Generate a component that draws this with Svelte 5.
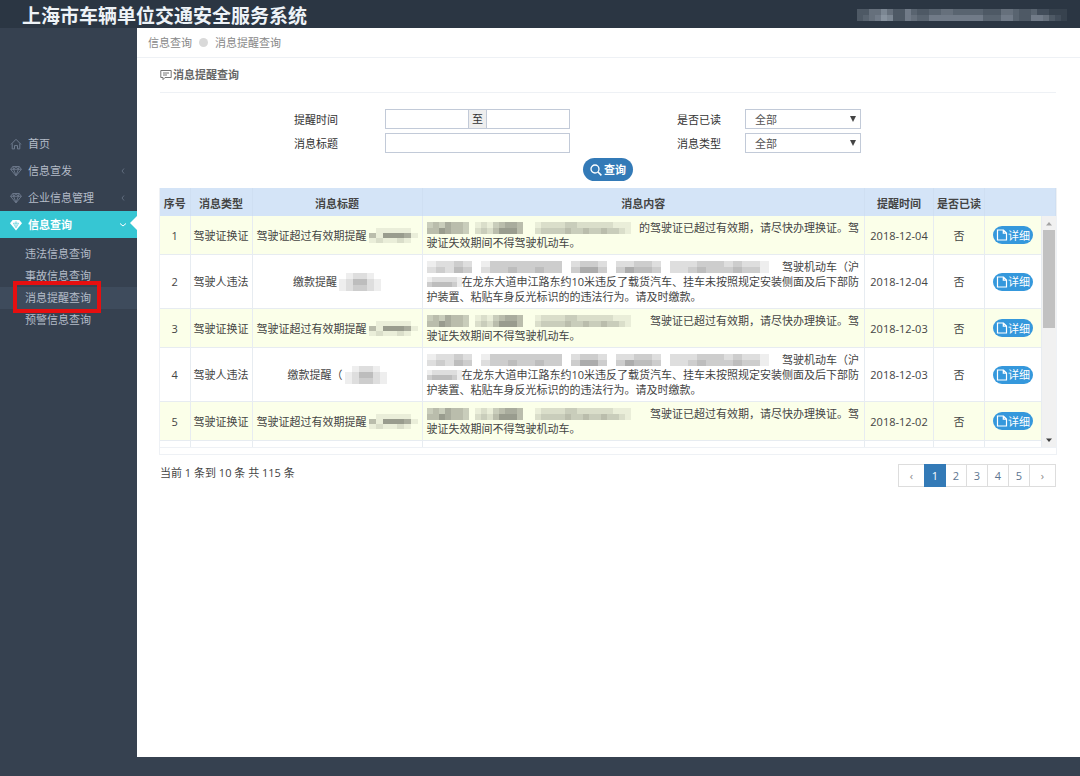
<script>
  const menu = [
    { label: '首页', icon: 'home' },
    { label: '信息宣发', icon: 'diamond', arrow: true },
    { label: '企业信息管理', icon: 'diamond', arrow: true },
    {
      label: '信息查询',
      icon: 'diamond',
      open: true,
      children: ['违法信息查询', '事故信息查询', '消息提醒查询', '预警信息查询']
    }
  ]

  let current = $state('消息提醒查询')
  let page = $state(1)
  const pages = [1, 2, 3, 4, 5]

  let form = $state({ from: '', to: '', title: '', read: 'all', type: 'all' })

  // masks: one digit per cell, 0 = clear, 9 = darkest
  const user = ['33557533643344554444433355433422111', '34568733654466666666644466433665321']
  const maskName = ['3435443012134554001222233222222111', '4465443023246664002333343343343321']
  const maskLong = ['12232013333333302332022332022233323221', '23243023343343303553035443022343334331']
  const maskShort = ['1222221', '3444431']
  const maskHead = ['0111110', '4166651', '1211210']
  const maskPlate = ['012210', '124421', '123321']

  const renewText = '驾驶证已超过有效期，请尽快办理换证。驾'
  const renewTail = '驶证失效期间不得驾驶机动车。'
  const placeText = '在龙东大道申江路东约10米违反了载货汽车、挂车未按照规定安装侧面及后下部防'
  const placeTail = '护装置、粘贴车身反光标识的的违法行为。请及时缴款。'

  const rows = [
    { id: 1, kind: 'renew', title: '驾驶证超过有效期提醒', lead: '的', date: '2018-12-04' },
    { id: 2, kind: 'fine', title: '缴款提醒', date: '2018-12-04' },
    { id: 3, kind: 'renew', title: '驾驶证超过有效期提醒', lead: '', date: '2018-12-03' },
    { id: 4, kind: 'fine', title: '缴款提醒（', date: '2018-12-03' },
    { id: 5, kind: 'renew', title: '驾驶证超过有效期提醒', lead: '', date: '2018-12-02' }
  ]
</script>

{#snippet mask(lines, cell, h, light = false)}
  <svg
    class="mask"
    class:light
    width={lines[0].length * cell}
    height={lines.length * h}
    shape-rendering="crispEdges"
    aria-hidden="true"
  >
    {#each lines as line, y}
      {#each line.split('') as v, x}
        <rect x={x * cell} y={y * h} width={cell} height={h} opacity={v * 0.065} />
      {/each}
    {/each}
  </svg>
{/snippet}

{#snippet cols()}
  <colgroup>
    <col class="c-no" />
    <col class="c-type" />
    <col class="c-title" />
    <col />
    <col class="c-date" />
    <col class="c-read" />
    <col class="c-act" />
  </colgroup>
{/snippet}

<div class="page">
  <header>
    <h1>上海市车辆单位交通安全服务系统</h1>
    <div class="user">{@render mask(user, 6, 6, true)}</div>
  </header>

  <div class="body">
    <nav>
      <ul>
        {#each menu as item}
          <li>
            <a href="#menu" class="item" class:active={item.open}>
              {#if item.icon === 'home'}
                <svg class="icon" viewBox="0 0 12 12">
                  <path d="M1 6.4 6 1.3l5 5.1M2.2 5.6v5.3h2.3V7.6h3v3.3h2.3V5.6" fill="none" stroke="currentColor" />
                </svg>
              {:else if item.open}
                <svg class="icon" viewBox="0 0 12 12">
                  <path d="M2.6 1h6.8L12 4.2 6 11.4 0 4.2z" fill="currentColor" />
                  <path d="M3.4 4.2h5.2L6 8.8zM6 2.2v5" fill="none" stroke="#36c6d3" stroke-width=".6" />
                </svg>
              {:else}
                <svg class="icon" viewBox="0 0 12 12">
                  <path d="M2.8 1.5h6.4l2.2 2.8L6 10.9.6 4.3zM.6 4.3h10.8M3.6 4.3 6 10.5l2.4-6.2L6 1.7zM2.8 1.5l.8 2.8M9.2 1.5l-.8 2.8" fill="none" stroke="currentColor" stroke-width=".9" />
                </svg>
              {/if}
              <span>{item.label}</span>
              {#if item.arrow}
                <svg class="arrow" viewBox="0 0 8 8"><path d="M5 1.5 3 4l2 2.5" /></svg>
              {:else if item.open}
                <svg class="arrow" viewBox="0 0 8 8"><path d="M1 2.5 4 5l3-2.5" /></svg>
              {/if}
            </a>
            {#if item.children}
              <ul class="sub">
                {#each item.children as child}
                  <li>
                    <a href="#sub" class:current={child === current} onclick={() => (current = child)}>{child}</a>
                  </li>
                {/each}
              </ul>
            {/if}
          </li>
        {/each}
      </ul>
    </nav>

    <main>
      <div class="crumbs">
        <a href="#query">信息查询</a>
        <i></i>
        <span>消息提醒查询</span>
      </div>

      <div class="content">
        <h2>
          <svg viewBox="0 0 12 12" width="12" height="12">
            <path d="M.8 1.5h10.4v7H5L3 10.6V8.5H.8zM3 4h6M3 6h4" fill="none" stroke="currentColor" stroke-width=".9" />
          </svg>
          消息提醒查询
        </h2>

        <form onsubmit={(e) => e.preventDefault()}>
          <div class="fields">
            <label for="from">提醒时间</label>
            <div class="range">
              <input id="from" type="text" bind:value={form.from} />
              <span>至</span>
              <input type="text" aria-label="结束时间" bind:value={form.to} />
            </div>
            <label class="second" for="read">是否已读</label>
            <div class="pick">
              <select id="read" bind:value={form.read}><option value="all">全部</option></select>
            </div>
            <label for="title">消息标题</label>
            <input id="title" type="text" bind:value={form.title} />
            <label class="second" for="type">消息类型</label>
            <div class="pick">
              <select id="type" bind:value={form.type}><option value="all">全部</option></select>
            </div>
          </div>
          <button class="search">
            <svg viewBox="0 0 12 12" width="12" height="12">
              <path d="M8 8l3.4 3.4" stroke="currentColor" stroke-width="1.6" />
              <circle cx="5" cy="5" r="4" fill="none" stroke="currentColor" stroke-width="1.3" />
            </svg>
            查询
          </button>
        </form>

        <div class="grid">
          <table class="head">
            {@render cols()}
            <thead>
              <tr>
                <th>序号</th>
                <th>消息类型</th>
                <th>消息标题</th>
                <th>消息内容</th>
                <th>提醒时间</th>
                <th>是否已读</th>
                <th></th>
              </tr>
            </thead>
          </table>
          <div class="scroller">
            <div class="view">
              <table>
                {@render cols()}
                <tbody>
                  {#each rows as row}
                    <tr>
                      <td>{row.id}</td>
                      <td>{row.kind === 'renew' ? '驾驶证换证' : '驾驶人违法'}</td>
                      <td>
                        <div class="line mid">
                          {row.title}
                          {#if row.kind === 'renew'}
                            {@render mask(maskHead, 7, 5)}
                          {:else}
                            {@render mask(maskPlate, 7, 6)}
                          {/if}
                        </div>
                      </td>
                      <td class="text">
                        {#if row.kind === 'renew'}
                          <div class="line fill">{@render mask(maskName, 6, 6)}<span>{row.lead}{renewText}</span></div>
                          <div class="line">{renewTail}</div>
                        {:else}
                          <div class="line fill">{@render mask(maskLong, 9, 6)}<span>驾驶机动车（沪</span></div>
                          <div class="line fill">{@render mask(maskShort, 5, 5)}<span>{placeText}</span></div>
                          <div class="line">{placeTail}</div>
                        {/if}
                      </td>
                      <td>{row.date}</td>
                      <td>否</td>
                      <td>
                        <button class="detail">
                          <svg viewBox="0 0 12 12" width="12" height="12">
                            <path d="M1.5 1h6l3 3v7h-9zM7.3 1v3.2h3.2" fill="none" stroke="currentColor" stroke-width="1.2" />
                          </svg>详细
                        </button>
                      </td>
                    </tr>
                  {/each}
                  <tr class="rest">
                    <td></td><td></td><td></td><td></td><td></td><td></td><td></td>
                  </tr>
                </tbody>
              </table>
            </div>
            <div class="bar">
              <svg viewBox="0 0 8 5"><path d="M1 4.5 4 1l3 3.5z" fill="#a3a3a3" /></svg>
              <div class="track"><div class="thumb"></div></div>
              <svg viewBox="0 0 8 5"><path d="M1 .5 4 4 7 .5z" fill="#404040" /></svg>
            </div>
          </div>
        </div>

        <div class="foot">
          <span>当前 1 条到 10 条 共 115 条</span>
          <div class="pager">
            <button class="step" aria-label="上一页" onclick={() => (page = Math.max(1, page - 1))}>‹</button>
            {#each pages as n}
              <button class:on={n === page} onclick={() => (page = n)}>{n}</button>
            {/each}
            <button class="step" aria-label="下一页" onclick={() => (page = Math.min(5, page + 1))}>›</button>
          </div>
        </div>
      </div>
    </main>
  </div>
</div>

<style>
  :global(body) {
    background: #364150;
  }

  .page {
    min-height: 100vh;
    box-sizing: border-box;
    padding-bottom: 19px;
    display: flex;
    flex-direction: column;
    font-family: 'Open Sans', 'Noto Sans CJK SC', sans-serif;
    font-size: 11px;
    line-height: 16px;
    color: #444;
  }

  header {
    height: 28px;
    display: flex;
    align-items: center;
    justify-content: space-between;
    padding: 0 13px 0 22px;
    background: #2b3643;
  }

  h1 {
    margin: 4px 0 0;
    font-size: 19px;
    line-height: 24px;
    font-weight: 700;
    color: #eef3f8;
  }

  .user {
    display: flex;
    margin-top: 2px;
  }

  .mask {
    flex: none;
    fill: #000;
  }

  .mask.light {
    fill: #dfe9f4;
  }

  .body {
    flex: 1;
    display: flex;
  }

  nav {
    width: 137px;
    flex: none;
    padding-top: 102px;
    box-sizing: border-box;
  }

  ul {
    list-style: none;
    margin: 0;
    padding: 0;
  }

  a {
    color: inherit;
    text-decoration: none;
  }

  .item {
    position: relative;
    display: flex;
    align-items: center;
    gap: 6px;
    height: 27px;
    padding: 0 10px;
    color: #b4bcc8;
  }

  .icon {
    width: 12px;
    height: 12px;
    color: #6f7c8f;
  }

  .arrow {
    width: 8px;
    height: 8px;
    margin-left: auto;
    fill: none;
    stroke: #606c7d;
  }

  .active {
    background: #36c6d3;
    color: #fff;
    font-weight: 700;
  }

  .active .icon {
    color: #fff;
  }

  .active .arrow {
    stroke: #fff;
  }

  .active::after {
    content: '';
    position: absolute;
    right: 0;
    top: 5px;
    border: 7px solid transparent;
    border-left: 0;
    border-right-color: #fff;
  }

  .sub {
    padding: 5px 0;
  }

  .sub a {
    position: relative;
    display: block;
    padding-left: 25px;
    line-height: 22px;
    color: #b4bcc8;
  }

  .sub .current {
    background: #3e4b5c;
  }

  .sub .current::after {
    content: '';
    position: absolute;
    left: 13px;
    top: -6px;
    width: 80px;
    height: 24px;
    border: 4px solid #e60f10;
  }

  main {
    flex: 1;
    min-width: 0;
    background: #fff;
  }

  .crumbs {
    display: flex;
    align-items: center;
    gap: 7px;
    height: 29px;
    padding-left: 11px;
    border-bottom: 1px solid #eef1f5;
    color: #888;
  }

  .crumbs i {
    width: 9px;
    height: 9px;
    border-radius: 50%;
    background: #d9d9d9;
  }

  .content {
    padding: 0 24px 0 23px;
  }

  h2 {
    display: flex;
    align-items: center;
    gap: 1px;
    height: 34px;
    margin: 0;
    border-bottom: 1px solid #eef1f5;
    font-size: 11px;
    font-weight: 700;
    color: #666;
  }

  form {
    padding: 16px 0 7px;
    display: flex;
    flex-direction: column;
    align-items: center;
  }

  .fields {
    width: 100%;
    box-sizing: border-box;
    padding: 0 195px 0 134px;
    display: grid;
    grid-template-columns: 91px 1fr 175px 116px;
    row-gap: 4px;
    align-items: center;
    color: #333;
  }

  .fields label {
    padding-top: 2px;
  }

  .fields .second {
    padding-left: 107px;
  }

  input,
  select {
    width: 100%;
    min-width: 0;
    height: 20px;
    box-sizing: border-box;
    border: 1px solid #c2cad8;
    border-radius: 0;
    background: #fff;
    font: inherit;
    color: #555;
  }

  .range {
    display: flex;
  }

  .range input {
    flex: 1;
  }

  .range span {
    padding: 0 3px;
    border: 1px solid #c2cad8;
    border-width: 1px 0;
    background: #eee;
    line-height: 18px;
    flex: none;
  }

  .pick {
    position: relative;
  }

  .pick select {
    appearance: none;
    padding: 2px 16px 0 9px;
  }

  .pick::after {
    content: '';
    position: absolute;
    right: 5px;
    top: 7px;
    border: 3px solid transparent;
    border-top: 6px solid #444;
    border-bottom: 0;
    pointer-events: none;
  }

  button {
    font: inherit;
    cursor: pointer;
  }

  .search {
    display: flex;
    align-items: center;
    gap: 2px;
    height: 23px;
    margin-top: 5px;
    padding: 0 7px;
    border: 0;
    border-radius: 12px;
    background: #337ab7;
    color: #fff;
    font-weight: 700;
  }

  .grid {
    border: 1px solid #eef1f5;
    border-top: 0;
    padding-bottom: 6px;
    margin: 0 -1px;
  }

  table {
    width: 100%;
    table-layout: fixed;
    border-collapse: collapse;
  }

  .c-no {
    width: 30px;
  }

  .c-type {
    width: 62px;
  }

  .c-title {
    width: 170px;
  }

  .c-date {
    width: 69px;
  }

  .c-read {
    width: 51px;
  }

  .c-act {
    width: 57px;
  }

  .head .c-act {
    width: 71px;
  }

  th {
    height: 28px;
    padding: 3px 0 0;
    box-sizing: border-box;
    background: #d4e4f7;
    border-right: 1px solid #cfdff2;
    font-weight: 700;
    color: #444;
    white-space: nowrap;
  }

  .scroller {
    display: flex;
    height: 231px;
    border-bottom: 1px solid #eef1f5;
  }

  .view {
    flex: 1;
    min-width: 0;
    overflow: hidden;
  }

  td {
    padding: 4px 0;
    border: 1px solid #e7ecf1;
    border-top: 0;
    border-left: 0;
    text-align: center;
    line-height: 15px;
    white-space: nowrap;
  }

  tr:nth-child(odd) td {
    background: #fbffe9;
  }

  .rest td {
    height: 6px;
    padding: 0;
  }

  .text {
    text-align: left;
    padding: 4px 5px 4px 4px;
  }

  .line {
    display: flex;
    align-items: center;
    height: 15px;
  }

  .mid {
    justify-content: center;
    gap: 2px;
  }

  .fill {
    justify-content: space-between;
  }

  .detail {
    display: inline-flex;
    align-items: center;
    justify-content: center;
    width: 40px;
    height: 18px;
    padding: 0;
    border: 0;
    border-radius: 9px;
    background: #3598dc;
    color: #fff;
    vertical-align: middle;
  }

  .bar {
    width: 14px;
    display: flex;
    flex-direction: column;
    align-items: center;
    gap: 4px;
    padding: 5px 0 4px;
    box-sizing: border-box;
    background: #f1f1f1;
  }

  .bar svg {
    width: 8px;
    height: 5px;
    flex: none;
  }

  .track {
    flex: 1;
    width: 12px;
  }

  .thumb {
    height: 48%;
    background: #c1c1c1;
  }

  .foot {
    display: flex;
    justify-content: space-between;
    padding-top: 9px;
  }

  .foot span {
    line-height: 18px;
  }

  .pager {
    display: flex;
  }

  .pager button {
    width: 22px;
    height: 23px;
    margin-left: -1px;
    padding: 0;
    border: 1px solid #ddd;
    background: #fff;
    color: #5d7590;
  }

  .pager .step {
    width: 27px;
    color: #888;
  }

  .pager .on {
    position: relative;
    border-color: #337ab7;
    background: #337ab7;
    color: #fff;
  }
</style>
